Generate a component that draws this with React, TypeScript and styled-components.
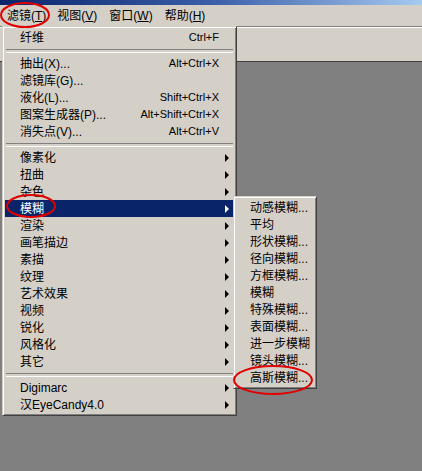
import React from "react";
import styled, { createGlobalStyle } from "styled-components";

const Global = createGlobalStyle`
  html, body { margin: 0; padding: 0; background: #808080; }
  body { overflow: hidden; }
  * { box-sizing: border-box; }
`;

const Screen = styled.div`
  width: 422px;
  height: 471px;
  display: flex;
  flex-direction: column;
  font-family: "Liberation Sans", "Noto Sans CJK SC", sans-serif;
  color: #000;
  position: relative;
  overflow: hidden;
`;

const TitleStrip = styled.div`
  height: 5px;
  background: linear-gradient(to right, #0a246a, #3a5ea8 50%, #a6caf0);
`;

const MenuBar = styled.div`
  height: 21px;
  background: #d4d0c8;
  display: flex;
  align-items: stretch;
  padding: 1px 0 0 3px;
`;

const BarItem = styled.div<{ $pressed?: boolean }>`
  display: flex;
  align-items: center;
  padding: 0 5px 0 4px;
  margin-right: 1px;
  font-size: 12px;
  line-height: 12px;
  border: 1px solid
    ${(p) => (p.$pressed ? "#808080 #ffffff #ffffff #808080" : "transparent")};
`;

const Under = styled.span`
  text-decoration: underline;
  text-underline-offset: 1px;
`;

const OptionsBar = styled.div`
  height: 36px;
  background: #d4d0c8;
  border-top: 1px solid #808080;
  box-shadow: inset 0 1px 0 #ffffff;
  border-bottom: 1px solid #404040;
`;

const Workspace = styled.div`
  flex: 1;
  background: #808080;
`;

const Overlay = styled.div`
  position: absolute;
  left: 0;
  top: 26px;
  right: 0;
  bottom: 0;
  pointer-events: none;
`;

const MenuPanel = styled.div<{ $left: number; $top: number; $width: number }>`
  position: absolute;
  left: ${(p) => p.$left}px;
  top: ${(p) => p.$top}px;
  width: ${(p) => p.$width}px;
  background: #d4d0c8;
  border: 1px solid;
  border-color: #d4d0c8 #404040 #404040 #d4d0c8;
  box-shadow: inset 1px 1px 0 #ffffff, inset -1px -1px 0 #808080;
  padding: 2px;
  display: flex;
  flex-direction: column;
`;

const Row = styled.div<{ $active?: boolean; $pl: number }>`
  height: 17px;
  display: flex;
  align-items: center;
  padding-left: ${(p) => p.$pl}px;
  padding-right: 3px;
  font-size: 12px;
  white-space: nowrap;
  background: ${(p) => (p.$active ? "#0a246a" : "transparent")};
  color: ${(p) => (p.$active ? "#ffffff" : "#000000")};
`;

const Label = styled.span`
  flex: 1;
  line-height: 12px;
`;

const Shortcut = styled.span`
  font-size: 11px;
  line-height: 11px;
  margin-right: 12px;
`;

const Arrow = styled.span<{ $active?: boolean }>`
  width: 0;
  height: 0;
  border-top: 4px solid transparent;
  border-bottom: 4px solid transparent;
  border-left: 4px solid ${(p) => (p.$active ? "#ffffff" : "#000000")};
  margin-right: 2px;
`;

const Separator = styled.div`
  height: 9px;
  display: flex;
  align-items: center;
  padding: 0 1px;
  &::before {
    content: "";
    flex: 1;
    height: 2px;
    border-top: 1px solid #808080;
    border-bottom: 1px solid #ffffff;
  }
`;

const Annotations = styled.svg`
  position: absolute;
  left: 0;
  top: 0;
  pointer-events: none;
`;

type Item =
  | { sep: true }
  | { label: string; shortcut?: string; sub?: boolean; active?: boolean };

const mainItems: Item[] = [
  { label: "纤维", shortcut: "Ctrl+F" },
  { sep: true },
  { label: "抽出(X)...", shortcut: "Alt+Ctrl+X" },
  { label: "滤镜库(G)..." },
  { label: "液化(L)...", shortcut: "Shift+Ctrl+X" },
  { label: "图案生成器(P)...", shortcut: "Alt+Shift+Ctrl+X" },
  { label: "消失点(V)...", shortcut: "Alt+Ctrl+V" },
  { sep: true },
  { label: "像素化", sub: true },
  { label: "扭曲", sub: true },
  { label: "杂色", sub: true },
  { label: "模糊", sub: true, active: true },
  { label: "渲染", sub: true },
  { label: "画笔描边", sub: true },
  { label: "素描", sub: true },
  { label: "纹理", sub: true },
  { label: "艺术效果", sub: true },
  { label: "视频", sub: true },
  { label: "锐化", sub: true },
  { label: "风格化", sub: true },
  { label: "其它", sub: true },
  { sep: true },
  { label: "Digimarc", sub: true },
  { label: "汉EyeCandy4.0", sub: true },
];

const blurItems = [
  "动感模糊...",
  "平均",
  "形状模糊...",
  "径向模糊...",
  "方框模糊...",
  "模糊",
  "特殊模糊...",
  "表面模糊...",
  "进一步模糊",
  "镜头模糊...",
  "高斯模糊...",
];

export default function App() {
  return (
    <Screen>
      <Global />
      <TitleStrip />
      <MenuBar>
        <BarItem $pressed>
          滤镜(<Under>T</Under>)
        </BarItem>
        <BarItem>
          视图(<Under>V</Under>)
        </BarItem>
        <BarItem>
          窗口(<Under>W</Under>)
        </BarItem>
        <BarItem>
          帮助(<Under>H</Under>)
        </BarItem>
      </MenuBar>
      <OptionsBar />
      <Workspace />
      <Overlay>
        <MenuPanel $left={2} $top={0} $width={235}>
          {mainItems.map((it, i) =>
            "sep" in it ? (
              <Separator key={i} />
            ) : (
              <Row key={i} $active={it.active} $pl={15}>
                <Label>{it.label}</Label>
                {it.shortcut && <Shortcut>{it.shortcut}</Shortcut>}
                {it.sub && <Arrow $active={it.active} />}
              </Row>
            )
          )}
        </MenuPanel>
        <MenuPanel $left={233} $top={170} $width={84}>
          {blurItems.map((t) => (
            <Row key={t} $pl={14}>
              <Label>{t}</Label>
            </Row>
          ))}
        </MenuPanel>
      </Overlay>
      <Annotations width={422} height={471} viewBox="0 0 422 471">
        <ellipse cx={25} cy={15} rx={24} ry={12} fill="none" stroke="#e00000" strokeWidth={2} />
        <ellipse cx={31} cy={206} rx={24} ry={11} fill="none" stroke="#e00000" strokeWidth={2} />
        <ellipse cx={273} cy={380} rx={39} ry={14} fill="none" stroke="#e00000" strokeWidth={2} />
      </Annotations>
    </Screen>
  );
}
